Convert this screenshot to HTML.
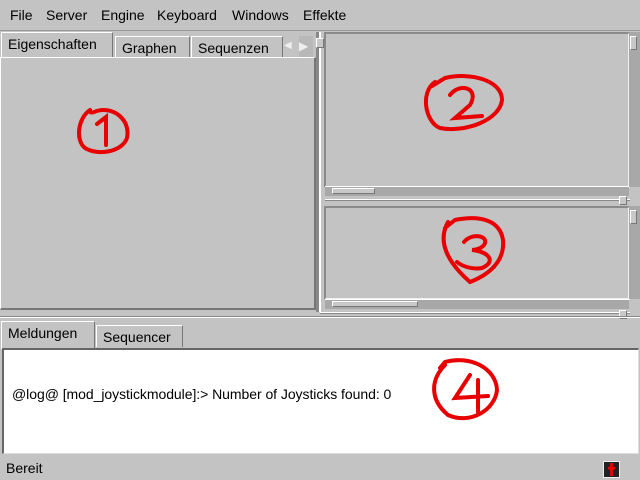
<!DOCTYPE html>
<html><head><style>
*{margin:0;padding:0;box-sizing:border-box}
body{width:640px;height:480px;background:#c3c3c3;font-family:"Liberation Sans",sans-serif;font-size:14px;color:#000;position:relative;overflow:hidden}
.a{position:absolute}
.m{position:absolute;top:7px}
.sunk{border-top:2px solid #8a8a8a;border-left:2px solid #8a8a8a;border-right:2px solid #f0f0f0;border-bottom:2px solid #f0f0f0}
.tab{position:absolute;border:1px solid #fff;border-right-color:#777;border-bottom:none;padding:3px 6px 0;height:22px;background:#c3c3c3}
.sb{background:#a8a8a8}
.th{background:#c8c8c8;border-top:1px solid #fff;border-left:1px solid #fff;border-bottom:1px solid #777;border-right:1px solid #777}
</style></head><body>
<div class="a" style="left:0;top:0;width:640px;height:31px;border-bottom:1px solid #999"></div>
<span class="m" style="left:10px">File</span>
<span class="m" style="left:46px">Server</span>
<span class="m" style="left:101px">Engine</span>
<span class="m" style="left:157px">Keyboard</span>
<span class="m" style="left:232px">Windows</span>
<span class="m" style="left:303px">Effekte</span>
<div class="tab" style="left:1px;top:32px;width:112px;height:26px;border-right:1px solid #777">Eigenschaften</div>
<div class="tab" style="left:115px;top:36px;width:75px">Graphen</div>
<div class="tab" style="left:191px;top:36px;width:92px">Sequenzen</div>
<div class="a" style="left:284px;top:36px;width:14px;height:22px;color:#eee;font-size:10px;padding-top:4px">◀</div>
<div class="a" style="left:299px;top:36px;width:14px;height:22px;color:#eee;font-size:12px;padding-top:3px;background:#b8b8b8">▶</div>
<div class="a" style="left:0;top:57px;width:316px;height:253px;border:1px solid #fff;border-right:2px solid #777;border-bottom:2px solid #777"></div>
<div class="a" style="left:316px;top:32px;width:3px;height:280px;background:#888"></div>
<div class="a" style="left:319px;top:32px;width:2px;height:280px;background:#fff"></div>
<div class="a th" style="left:316px;top:38px;width:8px;height:10px"></div>
<div class="a sunk" style="left:324px;top:32px;width:306px;height:156px"></div>
<div class="a sb" style="left:629px;top:32px;width:11px;height:155px"></div>
<div class="a th" style="left:630px;top:36px;width:7px;height:14px"></div>
<div class="a sb" style="left:325px;top:186px;width:304px;height:10px;border-top:1px solid #fff"></div>
<div class="a th" style="left:332px;top:188px;width:43px;height:6px"></div>
<div class="a" style="left:325px;top:199px;width:305px;height:2px;background:#fff;border-bottom:1px solid #888"></div>
<div class="a th" style="left:619px;top:196px;width:8px;height:9px"></div>
<div class="a sunk" style="left:324px;top:206px;width:306px;height:94px"></div>
<div class="a sb" style="left:629px;top:206px;width:11px;height:93px"></div>
<div class="a th" style="left:630px;top:210px;width:7px;height:14px"></div>
<div class="a sb" style="left:325px;top:299px;width:304px;height:10px;border-top:1px solid #fff"></div>
<div class="a th" style="left:332px;top:301px;width:86px;height:6px"></div>
<div class="a" style="left:320px;top:312px;width:310px;height:2px;background:#fff;border-bottom:1px solid #888"></div>
<div class="a th" style="left:619px;top:310px;width:8px;height:9px"></div>
<div class="a" style="left:0;top:316px;width:640px;height:2px;background:#fff;border-top:1px solid #888"></div>
<div class="tab" style="left:1px;top:321px;width:94px;height:28px;border-right:1px solid #777">Meldungen</div>
<div class="tab" style="left:96px;top:325px;width:87px">Sequencer</div>
<div class="a" style="left:2px;top:348px;width:637px;height:106px;background:#fff;border-top:2px solid #666;border-left:2px solid #666;border-right:1px solid #ddd;border-bottom:1px solid #ddd"></div>
<div class="a" style="left:12px;top:386px;font-size:14px;letter-spacing:-0.05px">@log@ [mod_joystickmodule]:&gt; Number of Joysticks found: 0</div>
<div class="a" style="left:6px;top:460px;font-size:14px">Bereit</div>
<div class="a" style="left:603px;top:461px;width:17px;height:17px;background:#222;border:1px solid #eee"></div>
<div class="a" style="left:608px;top:463px;width:7px;height:13px;background:#e00;clip-path:polygon(30% 0,70% 0,70% 30%,100% 30%,100% 50%,70% 50%,70% 100%,30% 100%,30% 50%,0 50%,0 30%,30% 30%)"></div>
<svg class="a" style="left:0;top:0" width="640" height="480">
<g fill="none" stroke="#e80000" stroke-width="4" stroke-linecap="round">
<path d="M90 110 C78 118 75 140 85 148 C98 156 122 152 127 138 C130 122 118 110 103 110 C96 110 92 114 90 112"/>
<path d="M97 124 L106 117 L106 145"/>
<path d="M435 82 C420 92 425 122 440 128 C465 133 500 120 502 100 C502 80 470 72 445 78 L432 86"/>
<path d="M450 95 C460 82 480 88 470 105 L455 118 L482 116"/>
<path d="M448 222 C438 240 445 260 470 282 C488 275 505 262 503 240 C500 220 480 215 455 220 L445 228"/>
<path d="M464 242 C472 232 490 236 484 245 C480 250 472 250 472 250 C490 252 496 262 482 268 C472 270 462 266 457 262"/>
<path d="M445 365 C430 380 430 400 448 415 C470 425 495 410 497 390 C496 368 470 355 445 362 L440 368"/>
<path d="M470 375 L455 398 L488 396 M478 380 L478 412"/>
</g></svg>
</body></html>
